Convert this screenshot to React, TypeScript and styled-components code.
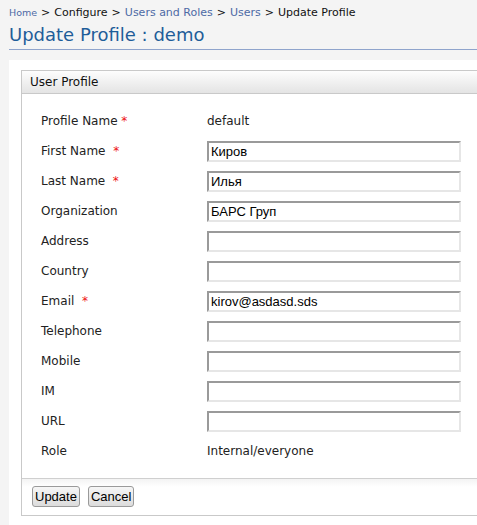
import React from "react";
import styled, { createGlobalStyle } from "styled-components";

const Global = createGlobalStyle`
  html, body { margin: 0; padding: 0; }
  body {
    background: #f4f4f4;
    font-family: "DejaVu Sans", Verdana, sans-serif;
    color: #222;
    overflow: hidden;
  }
`;

const Page = styled.div`
  padding-left: 9px;
`;

const Breadcrumb = styled.div`
  display: flex;
  align-items: baseline;
  gap: 4px;
  height: 18px;
  padding-top: 4px;
  font-size: 11px;
  line-height: 18px;
  color: #111;
  white-space: pre;
`;

const Crumb = styled.span<{ $link?: boolean; $small?: boolean }>`
  color: ${(p) => (p.$link ? "#4d6aa5" : "#111")};
  font-size: ${(p) => (p.$small ? "9.5px" : "11px")};
`;

const Title = styled.h2`
  margin: 0;
  padding: 2px 0 3px 0;
  font-size: 18px;
  font-weight: normal;
  line-height: 22px;
  color: #1f5d99;
  border-bottom: 1px solid #8fa4cc;
`;

const Content = styled.div`
  margin-top: 10px;
  background: #fff;
  padding: 10px 0 10px 12px;
`;

const Panel = styled.div`
  border: 1px solid #c9c9c9;
  border-right: 0;
  background: #fff;
`;

const PanelHeader = styled.div`
  height: 22px;
  line-height: 22px;
  padding-left: 8px;
  font-size: 12px;
  color: #111;
  background: linear-gradient(#fdfdfd, #e4e4e4);
  border-bottom: 1px solid #c9c9c9;
`;

const FormGrid = styled.div`
  display: grid;
  grid-template-columns: 166px 254px;
  grid-auto-rows: 30px;
  align-items: center;
  padding: 12px 0 12px 19px;
  font-size: 12px;
`;

const Label = styled.div`
  color: #222;
  white-space: pre;
`;

const Star = styled.span`
  color: #ee1111;
`;

const Value = styled.div`
  color: #222;
`;

const Input = styled.input`
  box-sizing: border-box;
  width: 254px;
  height: 21px;
  margin: 0;
  padding: 0 2px;
  border-style: solid;
  border-width: 2px;
  border-color: #9a9a9a #e6e6e6 #e6e6e6 #9a9a9a;
  font-family: "Liberation Sans", Arial, sans-serif;
  font-size: 13px;
  color: #000;
  background: #fff;
  outline: none;
`;

const Footer = styled.div`
  display: flex;
  gap: 8px;
  padding: 7px 10px 8px 10px;
  border-top: 1px solid #cfcfcf;
  background: linear-gradient(#f3f3f3, #fff 8px);
`;

const Button = styled.button`
  box-sizing: border-box;
  height: 21px;
  margin: 0;
  padding: 0 2px;
  border: 1px solid #9a9a9a;
  border-radius: 3px;
  background: linear-gradient(#f6f6f6, #dcdcdc);
  font-family: "Liberation Sans", Arial, sans-serif;
  font-size: 13px;
  color: #000;
`;

type Field = {
  label: string;
  required?: boolean;
  wide?: boolean;
  value?: string;
  input?: boolean;
};

const fields: Field[] = [
  { label: "Profile Name", required: true, value: "default" },
  { label: "First Name", required: true, wide: true, input: true, value: "Киров" },
  { label: "Last Name", required: true, wide: true, input: true, value: "Илья" },
  { label: "Organization", input: true, value: "БАРС Груп" },
  { label: "Address", input: true, value: "" },
  { label: "Country", input: true, value: "" },
  { label: "Email", required: true, wide: true, input: true, value: "kirov@asdasd.sds" },
  { label: "Telephone", input: true, value: "" },
  { label: "Mobile", input: true, value: "" },
  { label: "IM", input: true, value: "" },
  { label: "URL", input: true, value: "" },
  { label: "Role", value: "Internal/everyone" },
];

export default function App() {
  return (
    <>
      <Global />
      <Page>
        <Breadcrumb>
          <Crumb $link $small>Home</Crumb>
          <Crumb>&gt;</Crumb>
          <Crumb>Configure</Crumb>
          <Crumb>&gt;</Crumb>
          <Crumb $link>Users and Roles</Crumb>
          <Crumb>&gt;</Crumb>
          <Crumb $link>Users</Crumb>
          <Crumb>&gt;</Crumb>
          <Crumb>Update Profile</Crumb>
        </Breadcrumb>
        <Title>Update Profile : demo</Title>
        <Content>
          <Panel>
            <PanelHeader>User Profile</PanelHeader>
            <FormGrid>
              {fields.map((f) => (
                <React.Fragment key={f.label}>
                  <Label>
                    {f.label}
                    {f.required && (f.wide ? "\u00a0 " : " ")}
                    {f.required && <Star>*</Star>}
                  </Label>
                  {f.input ? (
                    <Input defaultValue={f.value} />
                  ) : (
                    <Value>{f.value}</Value>
                  )}
                </React.Fragment>
              ))}
            </FormGrid>
            <Footer>
              <Button>Update</Button>
              <Button>Cancel</Button>
            </Footer>
          </Panel>
        </Content>
      </Page>
    </>
  );
}
